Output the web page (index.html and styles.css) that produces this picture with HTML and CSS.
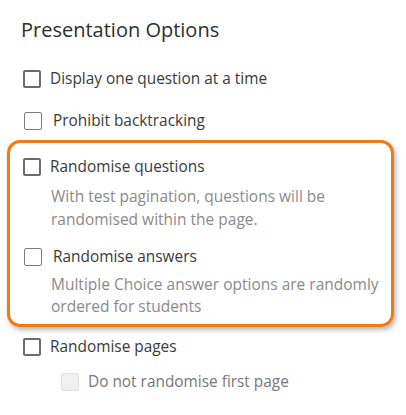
FILE: index.html
```html
<!DOCTYPE html>
<html>
<head>
<meta charset="utf-8">
<link rel="stylesheet" href="styles.css">
</head>
<body>
<div class="page">
  <h2 class="title">Presentation Options</h2>
  <div class="row r1"><span class="cb cb-bold"></span><span class="label">Display one question at a time</span></div>
  <div class="row r2"><span class="cb cb-thin"></span><span class="label label-wide">Prohibit backtracking</span></div>
  <div class="highlight">
    <div class="row r3"><span class="cb cb-bold"></span><span class="label">Randomise questions</span></div>
    <p class="desc d1">With test pagination, questions will be<br>randomised within the page.</p>
    <div class="row r4"><span class="cb cb-thin"></span><span class="label label-wide">Randomise answers</span></div>
    <p class="desc d2">Multiple Choice answer options are randomly<br>ordered for students</p>
  </div>
  <div class="row r5"><span class="cb cb-bold"></span><span class="label">Randomise pages</span></div>
  <div class="row r6"><span class="cb cb-disabled"></span><span class="label label-disabled">Do not randomise first page</span></div>
</div>
</body>
</html>
```
FILE: styles.css
```css
html, body {
  margin: 0;
  padding: 0;
  background: #ffffff;
}
.page {
  font-family: "Open Sans", "Liberation Sans", sans-serif;
  padding-top: 16px;
  width: 406px;
  height: 415px;
  box-sizing: border-box;
}
.title {
  margin: 0 0 0 21px;
  font-size: 20px;
  font-weight: 500;
  line-height: 27px;
  color: #2e2e2e;
}
.row {
  display: flex;
  align-items: center;
  height: 20px;
  padding-left: 23px;
}
.cb {
  flex: none;
  width: 18px;
  height: 18px;
  box-sizing: border-box;
  border-radius: 2px;
  background: #fff;
}
.cb-bold {
  border: 2px solid #6b6b6b;
}
.cb-thin {
  border: 1.5px solid #7a7a7a;
  margin-left: 1px;
}
.cb-disabled {
  border: 1px solid #e2e2e2;
  background: #f0f0f0;
}
.label {
  font-size: 15.4px;
  line-height: 20px;
  color: #3a3a3a;
  margin-left: 9px;
  white-space: nowrap;
}
.label-wide {
  margin-left: 11px;
}
.label-disabled {
  color: #777777;
}
.r1 { margin-top: 26px; }
.r2 { margin-top: 22px; }
.highlight {
  margin: 9px 12px 0 7px;
  border: 3px solid #f27a12;
  border-radius: 13px;
  box-shadow: 2px 3px 5px rgba(0, 0, 0, 0.28);
  padding: 14px 0 7px 0;
}
.highlight .row {
  padding-left: 13px;
}
.desc {
  margin: 0;
  padding-left: 41px;
  font-size: 15.5px;
  color: #8a8a8a;
  white-space: nowrap;
}
.d1 {
  margin-top: 8px;
  line-height: 23px;
}
.r4 { margin-top: 16px; }
.d2 {
  margin-top: 6px;
  line-height: 22px;
}
.r5 { margin-top: 10px; }
.r6 {
  margin-top: 15px;
  padding-left: 61px;
}
```
